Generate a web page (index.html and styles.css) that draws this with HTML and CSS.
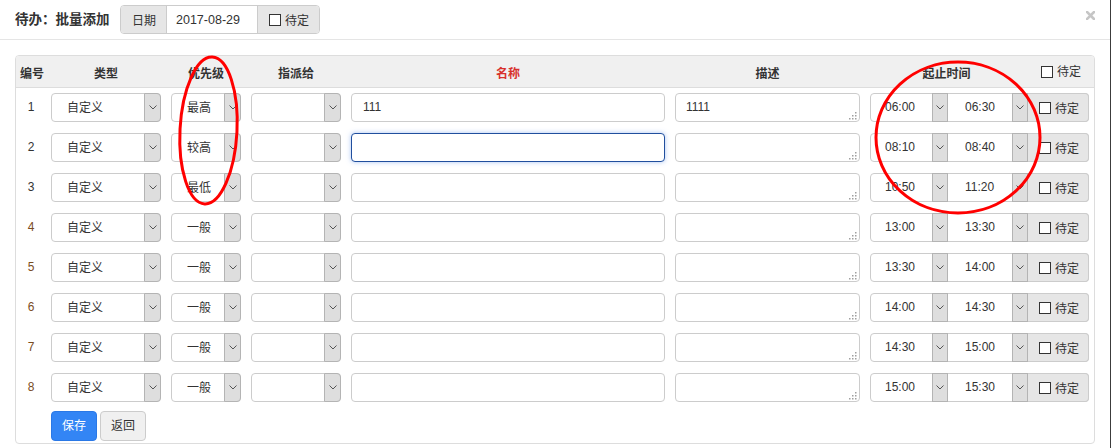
FILE: index.html
```html
<!DOCTYPE html>
<html lang="zh-CN">
<head>
<meta charset="utf-8">
<title>待办：批量添加</title>
<link rel="stylesheet" href="styles.css">
</head>
<body>
<div class="page">
  <div class="hd">
    <h4 class="title">待办：批量添加</h4>
    <div class="igroup">
      <span class="addon">日期</span>
      <span class="dinput">2017-08-29</span>
      <span class="addon chk"><i class="cb"></i><span class="cbt">待定</span></span>
    </div>
    <span class="close"><svg width="9" height="9" viewBox="0 0 9 9"><path d="M1 1L8 8M8 1L1 8" stroke="#c6c6c6" stroke-width="2.6" stroke-linecap="square"/></svg></span>
  </div>

  <div class="panel">
    <div class="grid thead">
      <div class="c n0">编号</div>
      <div class="c">类型</div>
      <div class="c">优先级</div>
      <div class="c">指派给</div>
      <div class="c red">名称</div>
      <div class="c">描述</div>
      <div class="c th-time"><span class="t1">起止时间</span><span class="t2"><i class="cb"></i><span class="cbt">待定</span></span></div>
    </div>

    <div class="grid row">
      <div class="c num">1</div>
      <div class="c"><div class="sel"><span class="v">自定义</span><span class="arr"><svg width="8" height="5" viewBox="0 0 8 5"><polyline points="0.5,0.5 4,4 7.5,0.5" fill="none" stroke="#555"/></svg></span></div></div>
      <div class="c"><div class="sel"><span class="v">最高</span><span class="arr"><svg width="8" height="5" viewBox="0 0 8 5"><polyline points="0.5,0.5 4,4 7.5,0.5" fill="none" stroke="#555"/></svg></span></div></div>
      <div class="c"><div class="sel"><span class="v"></span><span class="arr"><svg width="8" height="5" viewBox="0 0 8 5"><polyline points="0.5,0.5 4,4 7.5,0.5" fill="none" stroke="#555"/></svg></span></div></div>
      <div class="c"><div class="inp">111</div></div>
      <div class="c"><div class="ta">1111<svg class="grip" width="9" height="8" viewBox="0 0 9 8"><rect x="7" y="0" width="1.5" height="1.5"/><rect x="4" y="3" width="1.5" height="1.5"/><rect x="7" y="3" width="1.5" height="1.5"/><rect x="1" y="6" width="1.5" height="1.5"/><rect x="4" y="6" width="1.5" height="1.5"/><rect x="7" y="6" width="1.5" height="1.5"/></svg></div></div>
      <div class="c"><div class="tg"><span class="s1">06:00</span><span class="arr"><svg width="8" height="5" viewBox="0 0 8 5"><polyline points="0.5,0.5 4,4 7.5,0.5" fill="none" stroke="#555"/></svg></span><span class="s2">06:30</span><span class="arr"><svg width="8" height="5" viewBox="0 0 8 5"><polyline points="0.5,0.5 4,4 7.5,0.5" fill="none" stroke="#555"/></svg></span><span class="add"><i class="cb"></i><span class="cbt">待定</span></span></div></div>
    </div>

    <div class="grid row">
      <div class="c num">2</div>
      <div class="c"><div class="sel"><span class="v">自定义</span><span class="arr"><svg width="8" height="5" viewBox="0 0 8 5"><polyline points="0.5,0.5 4,4 7.5,0.5" fill="none" stroke="#555"/></svg></span></div></div>
      <div class="c"><div class="sel"><span class="v">较高</span><span class="arr"><svg width="8" height="5" viewBox="0 0 8 5"><polyline points="0.5,0.5 4,4 7.5,0.5" fill="none" stroke="#555"/></svg></span></div></div>
      <div class="c"><div class="sel"><span class="v"></span><span class="arr"><svg width="8" height="5" viewBox="0 0 8 5"><polyline points="0.5,0.5 4,4 7.5,0.5" fill="none" stroke="#555"/></svg></span></div></div>
      <div class="c"><div class="inp focus"></div></div>
      <div class="c"><div class="ta"><svg class="grip" width="9" height="8" viewBox="0 0 9 8"><rect x="7" y="0" width="1.5" height="1.5"/><rect x="4" y="3" width="1.5" height="1.5"/><rect x="7" y="3" width="1.5" height="1.5"/><rect x="1" y="6" width="1.5" height="1.5"/><rect x="4" y="6" width="1.5" height="1.5"/><rect x="7" y="6" width="1.5" height="1.5"/></svg></div></div>
      <div class="c"><div class="tg"><span class="s1">08:10</span><span class="arr"><svg width="8" height="5" viewBox="0 0 8 5"><polyline points="0.5,0.5 4,4 7.5,0.5" fill="none" stroke="#555"/></svg></span><span class="s2">08:40</span><span class="arr"><svg width="8" height="5" viewBox="0 0 8 5"><polyline points="0.5,0.5 4,4 7.5,0.5" fill="none" stroke="#555"/></svg></span><span class="add"><i class="cb"></i><span class="cbt">待定</span></span></div></div>
    </div>

    <div class="grid row">
      <div class="c num">3</div>
      <div class="c"><div class="sel"><span class="v">自定义</span><span class="arr"><svg width="8" height="5" viewBox="0 0 8 5"><polyline points="0.5,0.5 4,4 7.5,0.5" fill="none" stroke="#555"/></svg></span></div></div>
      <div class="c"><div class="sel"><span class="v">最低</span><span class="arr"><svg width="8" height="5" viewBox="0 0 8 5"><polyline points="0.5,0.5 4,4 7.5,0.5" fill="none" stroke="#555"/></svg></span></div></div>
      <div class="c"><div class="sel"><span class="v"></span><span class="arr"><svg width="8" height="5" viewBox="0 0 8 5"><polyline points="0.5,0.5 4,4 7.5,0.5" fill="none" stroke="#555"/></svg></span></div></div>
      <div class="c"><div class="inp"></div></div>
      <div class="c"><div class="ta"><svg class="grip" width="9" height="8" viewBox="0 0 9 8"><rect x="7" y="0" width="1.5" height="1.5"/><rect x="4" y="3" width="1.5" height="1.5"/><rect x="7" y="3" width="1.5" height="1.5"/><rect x="1" y="6" width="1.5" height="1.5"/><rect x="4" y="6" width="1.5" height="1.5"/><rect x="7" y="6" width="1.5" height="1.5"/></svg></div></div>
      <div class="c"><div class="tg"><span class="s1">10:50</span><span class="arr"><svg width="8" height="5" viewBox="0 0 8 5"><polyline points="0.5,0.5 4,4 7.5,0.5" fill="none" stroke="#555"/></svg></span><span class="s2">11:20</span><span class="arr"><svg width="8" height="5" viewBox="0 0 8 5"><polyline points="0.5,0.5 4,4 7.5,0.5" fill="none" stroke="#555"/></svg></span><span class="add"><i class="cb"></i><span class="cbt">待定</span></span></div></div>
    </div>

    <div class="grid row">
      <div class="c num br">4</div>
      <div class="c"><div class="sel"><span class="v">自定义</span><span class="arr"><svg width="8" height="5" viewBox="0 0 8 5"><polyline points="0.5,0.5 4,4 7.5,0.5" fill="none" stroke="#555"/></svg></span></div></div>
      <div class="c"><div class="sel"><span class="v">一般</span><span class="arr"><svg width="8" height="5" viewBox="0 0 8 5"><polyline points="0.5,0.5 4,4 7.5,0.5" fill="none" stroke="#555"/></svg></span></div></div>
      <div class="c"><div class="sel"><span class="v"></span><span class="arr"><svg width="8" height="5" viewBox="0 0 8 5"><polyline points="0.5,0.5 4,4 7.5,0.5" fill="none" stroke="#555"/></svg></span></div></div>
      <div class="c"><div class="inp"></div></div>
      <div class="c"><div class="ta"><svg class="grip" width="9" height="8" viewBox="0 0 9 8"><rect x="7" y="0" width="1.5" height="1.5"/><rect x="4" y="3" width="1.5" height="1.5"/><rect x="7" y="3" width="1.5" height="1.5"/><rect x="1" y="6" width="1.5" height="1.5"/><rect x="4" y="6" width="1.5" height="1.5"/><rect x="7" y="6" width="1.5" height="1.5"/></svg></div></div>
      <div class="c"><div class="tg"><span class="s1">13:00</span><span class="arr"><svg width="8" height="5" viewBox="0 0 8 5"><polyline points="0.5,0.5 4,4 7.5,0.5" fill="none" stroke="#555"/></svg></span><span class="s2">13:30</span><span class="arr"><svg width="8" height="5" viewBox="0 0 8 5"><polyline points="0.5,0.5 4,4 7.5,0.5" fill="none" stroke="#555"/></svg></span><span class="add"><i class="cb"></i><span class="cbt">待定</span></span></div></div>
    </div>

    <div class="grid row">
      <div class="c num br">5</div>
      <div class="c"><div class="sel"><span class="v">自定义</span><span class="arr"><svg width="8" height="5" viewBox="0 0 8 5"><polyline points="0.5,0.5 4,4 7.5,0.5" fill="none" stroke="#555"/></svg></span></div></div>
      <div class="c"><div class="sel"><span class="v">一般</span><span class="arr"><svg width="8" height="5" viewBox="0 0 8 5"><polyline points="0.5,0.5 4,4 7.5,0.5" fill="none" stroke="#555"/></svg></span></div></div>
      <div class="c"><div class="sel"><span class="v"></span><span class="arr"><svg width="8" height="5" viewBox="0 0 8 5"><polyline points="0.5,0.5 4,4 7.5,0.5" fill="none" stroke="#555"/></svg></span></div></div>
      <div class="c"><div class="inp"></div></div>
      <div class="c"><div class="ta"><svg class="grip" width="9" height="8" viewBox="0 0 9 8"><rect x="7" y="0" width="1.5" height="1.5"/><rect x="4" y="3" width="1.5" height="1.5"/><rect x="7" y="3" width="1.5" height="1.5"/><rect x="1" y="6" width="1.5" height="1.5"/><rect x="4" y="6" width="1.5" height="1.5"/><rect x="7" y="6" width="1.5" height="1.5"/></svg></div></div>
      <div class="c"><div class="tg"><span class="s1">13:30</span><span class="arr"><svg width="8" height="5" viewBox="0 0 8 5"><polyline points="0.5,0.5 4,4 7.5,0.5" fill="none" stroke="#555"/></svg></span><span class="s2">14:00</span><span class="arr"><svg width="8" height="5" viewBox="0 0 8 5"><polyline points="0.5,0.5 4,4 7.5,0.5" fill="none" stroke="#555"/></svg></span><span class="add"><i class="cb"></i><span class="cbt">待定</span></span></div></div>
    </div>

    <div class="grid row">
      <div class="c num br">6</div>
      <div class="c"><div class="sel"><span class="v">自定义</span><span class="arr"><svg width="8" height="5" viewBox="0 0 8 5"><polyline points="0.5,0.5 4,4 7.5,0.5" fill="none" stroke="#555"/></svg></span></div></div>
      <div class="c"><div class="sel"><span class="v">一般</span><span class="arr"><svg width="8" height="5" viewBox="0 0 8 5"><polyline points="0.5,0.5 4,4 7.5,0.5" fill="none" stroke="#555"/></svg></span></div></div>
      <div class="c"><div class="sel"><span class="v"></span><span class="arr"><svg width="8" height="5" viewBox="0 0 8 5"><polyline points="0.5,0.5 4,4 7.5,0.5" fill="none" stroke="#555"/></svg></span></div></div>
      <div class="c"><div class="inp"></div></div>
      <div class="c"><div class="ta"><svg class="grip" width="9" height="8" viewBox="0 0 9 8"><rect x="7" y="0" width="1.5" height="1.5"/><rect x="4" y="3" width="1.5" height="1.5"/><rect x="7" y="3" width="1.5" height="1.5"/><rect x="1" y="6" width="1.5" height="1.5"/><rect x="4" y="6" width="1.5" height="1.5"/><rect x="7" y="6" width="1.5" height="1.5"/></svg></div></div>
      <div class="c"><div class="tg"><span class="s1">14:00</span><span class="arr"><svg width="8" height="5" viewBox="0 0 8 5"><polyline points="0.5,0.5 4,4 7.5,0.5" fill="none" stroke="#555"/></svg></span><span class="s2">14:30</span><span class="arr"><svg width="8" height="5" viewBox="0 0 8 5"><polyline points="0.5,0.5 4,4 7.5,0.5" fill="none" stroke="#555"/></svg></span><span class="add"><i class="cb"></i><span class="cbt">待定</span></span></div></div>
    </div>

    <div class="grid row">
      <div class="c num br">7</div>
      <div class="c"><div class="sel"><span class="v">自定义</span><span class="arr"><svg width="8" height="5" viewBox="0 0 8 5"><polyline points="0.5,0.5 4,4 7.5,0.5" fill="none" stroke="#555"/></svg></span></div></div>
      <div class="c"><div class="sel"><span class="v">一般</span><span class="arr"><svg width="8" height="5" viewBox="0 0 8 5"><polyline points="0.5,0.5 4,4 7.5,0.5" fill="none" stroke="#555"/></svg></span></div></div>
      <div class="c"><div class="sel"><span class="v"></span><span class="arr"><svg width="8" height="5" viewBox="0 0 8 5"><polyline points="0.5,0.5 4,4 7.5,0.5" fill="none" stroke="#555"/></svg></span></div></div>
      <div class="c"><div class="inp"></div></div>
      <div class="c"><div class="ta"><svg class="grip" width="9" height="8" viewBox="0 0 9 8"><rect x="7" y="0" width="1.5" height="1.5"/><rect x="4" y="3" width="1.5" height="1.5"/><rect x="7" y="3" width="1.5" height="1.5"/><rect x="1" y="6" width="1.5" height="1.5"/><rect x="4" y="6" width="1.5" height="1.5"/><rect x="7" y="6" width="1.5" height="1.5"/></svg></div></div>
      <div class="c"><div class="tg"><span class="s1">14:30</span><span class="arr"><svg width="8" height="5" viewBox="0 0 8 5"><polyline points="0.5,0.5 4,4 7.5,0.5" fill="none" stroke="#555"/></svg></span><span class="s2">15:00</span><span class="arr"><svg width="8" height="5" viewBox="0 0 8 5"><polyline points="0.5,0.5 4,4 7.5,0.5" fill="none" stroke="#555"/></svg></span><span class="add"><i class="cb"></i><span class="cbt">待定</span></span></div></div>
    </div>

    <div class="grid row">
      <div class="c num br">8</div>
      <div class="c"><div class="sel"><span class="v">自定义</span><span class="arr"><svg width="8" height="5" viewBox="0 0 8 5"><polyline points="0.5,0.5 4,4 7.5,0.5" fill="none" stroke="#555"/></svg></span></div></div>
      <div class="c"><div class="sel"><span class="v">一般</span><span class="arr"><svg width="8" height="5" viewBox="0 0 8 5"><polyline points="0.5,0.5 4,4 7.5,0.5" fill="none" stroke="#555"/></svg></span></div></div>
      <div class="c"><div class="sel"><span class="v"></span><span class="arr"><svg width="8" height="5" viewBox="0 0 8 5"><polyline points="0.5,0.5 4,4 7.5,0.5" fill="none" stroke="#555"/></svg></span></div></div>
      <div class="c"><div class="inp"></div></div>
      <div class="c"><div class="ta"><svg class="grip" width="9" height="8" viewBox="0 0 9 8"><rect x="7" y="0" width="1.5" height="1.5"/><rect x="4" y="3" width="1.5" height="1.5"/><rect x="7" y="3" width="1.5" height="1.5"/><rect x="1" y="6" width="1.5" height="1.5"/><rect x="4" y="6" width="1.5" height="1.5"/><rect x="7" y="6" width="1.5" height="1.5"/></svg></div></div>
      <div class="c"><div class="tg"><span class="s1">15:00</span><span class="arr"><svg width="8" height="5" viewBox="0 0 8 5"><polyline points="0.5,0.5 4,4 7.5,0.5" fill="none" stroke="#555"/></svg></span><span class="s2">15:30</span><span class="arr"><svg width="8" height="5" viewBox="0 0 8 5"><polyline points="0.5,0.5 4,4 7.5,0.5" fill="none" stroke="#555"/></svg></span><span class="add"><i class="cb"></i><span class="cbt">待定</span></span></div></div>
    </div>

    <div class="foot">
      <button class="btn pri">保存</button>
      <button class="btn">返回</button>
    </div>
  </div>

  <svg class="marks" width="1112" height="448" viewBox="0 0 1112 448">
    <ellipse cx="208.5" cy="130.5" rx="28.5" ry="73.5" transform="rotate(3 208.5 130.5)" fill="none" stroke="#ff0000" stroke-width="3"/>
    <ellipse cx="958" cy="137.5" rx="82" ry="75.5" fill="none" stroke="#ff0000" stroke-width="3"/>
  </svg>
</div>
</body>
</html>
```

FILE: styles.css
```css
* { box-sizing: border-box; }

body {
  margin: 0;
  font-family: "Liberation Sans", "Noto Sans CJK SC", sans-serif;
  font-size: 12px;
  color: #333;
  background: #fff;
}

.page {
  position: relative;
  width: 1111px;
  height: 448px;
  border-right: 1px solid #3c3c3c;
}

/* header */
.hd {
  display: flex;
  align-items: center;
  height: 40px;
  padding: 5px 15px;
  border-bottom: 1px solid #e5e5e5;
}
.title {
  width: 105px;
  margin: 0;
  font-size: 13.5px;
  font-weight: bold;
  line-height: 20px;
  color: #333;
}
.igroup {
  display: flex;
  height: 29px;
  border: 1px solid #ccc;
  border-radius: 4px;
  overflow: hidden;
}
.addon {
  display: flex;
  align-items: center;
  padding: 0 10px 0 11px;
  background: #e6e6e6;
}
.dinput {
  display: flex;
  align-items: center;
  width: 92px;
  padding-left: 9px;
  background: #fff;
  border-left: 1px solid #ccc;
  border-right: 1px solid #ccc;
  font-size: 12.5px;
}
.addon.chk { padding: 0 10px 0 11px; }

.cb {
  display: inline-block;
  width: 12px;
  height: 12px;
  border: 1px solid #333;
  background: #fff;
  margin-right: 4px;
  flex: none;
}
.cbt { margin-top: 3px; line-height: 14px; }

.close {
  margin-left: auto;
  align-self: flex-start;
  margin-top: 6px;
  display: flex;
}

/* panel */
.panel {
  width: 1080px;
  margin: 15px 0 0 15px;
  border: 1px solid #ddd;
  border-radius: 4px;
  overflow: hidden;
}
.grid {
  display: grid;
  grid-template-columns: 30px 120px 80px 100px 324px 195px 229px;
}
.thead {
  height: 32px;
  background: #f0f0f0;
  border-bottom: 1px solid #ddd;
  align-items: center;
  font-weight: bold;
}
.thead .c { text-align: center; padding-top: 1px; white-space: nowrap; }
.thead .n0 { padding: 1px 0 0 2px; }
.thead .red { color: #d8302c; }
.c { padding: 0 5px; }
.th-time {
  display: flex;
  align-items: center;
}
.th-time .t1 { width: 153px; text-align: center; }
.th-time .t2 {
  display: flex;
  align-items: center;
  padding-left: 18px;
  font-weight: normal;
}
.th-time .cbt { margin-top: 0; }

.row {
  height: 40px;
  padding: 5px 0 6px;
  align-items: start;
}
.num { text-align: center; line-height: 29px; height: 29px; padding: 0; }
.num.br { color: #7a4c1e; }

.sel {
  display: flex;
  height: 29px;
  border: 1px solid #ccc;
  border-radius: 4px;
  background: #fff;
}
.sel .v {
  flex: 1;
  padding-left: 15px;
  line-height: 28px;
}
.arr {
  display: flex;
  align-items: center;
  justify-content: center;
  width: 17px;
  margin: -1px -1px -1px 0;
  border: 1px solid #b4b4b4;
  border-radius: 0 4px 4px 0;
  background: #dedede;
  flex: none;
}

.inp {
  height: 29px;
  border: 1px solid #ccc;
  border-radius: 4px;
  padding-left: 11px;
  line-height: 27px;
  background: #fff;
}
.inp.focus {
  border-color: #214f9e;
  box-shadow: 0 0 5px rgba(102, 150, 233, 0.55);
}
.ta {
  position: relative;
  height: 29px;
  border: 1px solid #ccc;
  border-radius: 4px;
  padding-left: 10px;
  line-height: 27px;
  background: #fff;
}
.grip {
  position: absolute;
  right: 2px;
  bottom: 1px;
  fill: #a0a0a0;
}

.tg {
  display: flex;
  height: 29px;
  border: 1px solid #ccc;
  border-radius: 4px;
  background: #fff;
}
.tg .s1 { width: 61px; padding-left: 14px; line-height: 27px; }
.tg .s2 { width: 64px; padding-left: 17px; line-height: 27px; }
.tg .arr { width: 16px; margin: -1px 0; border-radius: 0; }
.tg .add {
  flex: 1;
  display: flex;
  align-items: center;
  padding-left: 11px;
  margin: -1px -1px -1px 0;
  background: #e6e6e6;
  border: 1px solid #ccc;
  border-left: none;
  border-radius: 0 4px 4px 0;
}

.foot {
  display: flex;
  gap: 3px;
  padding: 3px 0 2px 35px;
}
.btn {
  height: 30px;
  padding: 0 10px;
  border: 1px solid #ccc;
  border-radius: 4px;
  background: #f0f0f0;
  color: #333;
  font-family: inherit;
  font-size: 12px;
  line-height: 28px;
}
.btn.pri {
  background: #3385f5;
  border-color: #2a78e6;
  color: #fff;
}

.marks {
  position: absolute;
  left: 0;
  top: 0;
  pointer-events: none;
}
```
